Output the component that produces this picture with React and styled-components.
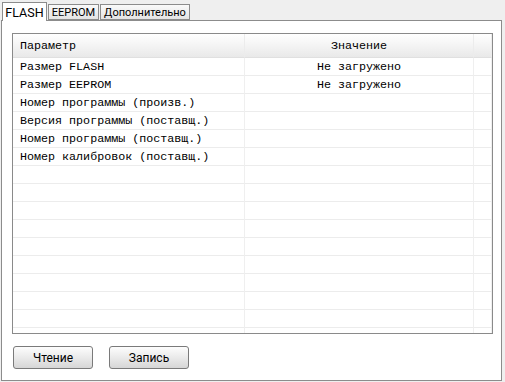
import React from 'react';
import styled, { createGlobalStyle } from 'styled-components';

const GlobalStyle = createGlobalStyle`
  html, body {
    margin: 0;
    padding: 0;
    background: #efefef;
  }
`;

const Window = styled.div`
  width: 505px;
  height: 382px;
  display: flex;
  flex-direction: column;
  background: #efefef;
  font-family: Roboto, "Liberation Sans", Arial, sans-serif;
  font-size: 11px;
  color: #000;
  overflow: hidden;
`;

const TabBar = styled.div`
  display: flex;
  align-items: flex-end;
  height: 20px;
  padding-left: 2px;
  position: relative;
  z-index: 1;
`;

const Tab = styled.div`
  width: ${(p) => p.$w}px;
  height: ${(p) => (p.$active ? '19px' : '16px')};
  margin-bottom: ${(p) => (p.$active ? '-1px' : '0')};
  margin-left: ${(p) => (p.$active ? '0' : '1px')};
  display: flex;
  justify-content: center;
  align-items: ${(p) => (p.$active ? 'flex-start' : 'center')};
  padding-top: ${(p) => (p.$active ? '2px' : '0')};
  box-sizing: border-box;
  border: 1px solid #8c8c8c;
  border-bottom: ${(p) => (p.$active ? 'none' : '1px solid #8c8c8c')};
  background: ${(p) => (p.$active ? '#fff' : 'linear-gradient(#fafafa, #e4e4e4)')};
  font-size: ${(p) => (p.$active ? '12.5px' : '11px')};
  white-space: nowrap;
`;

const Pane = styled.div`
  margin-left: 1px;
  width: 501px;
  height: 361px;
  box-sizing: border-box;
  border: 1px solid #8c8c8c;
  background: #fff;
  padding: 12px 9px 0 10px;
  display: flex;
  flex-direction: column;
`;

const Table = styled.div`
  width: 481px;
  height: 301px;
  box-sizing: border-box;
  border: 1px solid #8a8a8a;
  overflow: hidden;
  display: grid;
  grid-template-columns: 232px 229px 18px;
  grid-auto-rows: 18px;
  grid-template-rows: 24px;
  font-family: "Liberation Mono", "Courier New", monospace;
  font-size: 11.7px;
`;

const HeadCell = styled.div`
  background: linear-gradient(#ffffff, #e9e9e9);
  border-bottom: 1px solid #e0e0e0;
  border-right: 1px solid #ececec;
  display: flex;
  align-items: center;
  padding-top: 1px;
  justify-content: ${(p) => (p.$center ? 'center' : 'flex-start')};
  padding-left: ${(p) => (p.$center ? '0' : '7px')};
`;

const Cell = styled.div`
  border-bottom: 1px solid #ececec;
  border-right: 1px solid #efefef;
  display: flex;
  align-items: center;
  padding-top: 1px;
  justify-content: ${(p) => (p.$center ? 'center' : 'flex-start')};
  padding-left: ${(p) => (p.$center ? '0' : '7px')};
  white-space: nowrap;
  overflow: hidden;
`;

const Buttons = styled.div`
  display: flex;
  gap: 16px;
  margin-top: 12px;
  padding-left: 1px;
`;

const Button = styled.button`
  width: 80px;
  height: 23px;
  box-sizing: border-box;
  border: 1px solid #7a7a7a;
  border-radius: 3px;
  background: linear-gradient(#fdfdfd, #e6e6e6 60%, #d6d6d6);
  font-family: Roboto, "Liberation Sans", Arial, sans-serif;
  font-size: 12px;
  color: #000;
  padding: 0;
`;

const rows = [
  ['Размер FLASH', 'Не загружено'],
  ['Размер EEPROM', 'Не загружено'],
  ['Номер программы (произв.)', ''],
  ['Версия программы (поставщ.)', ''],
  ['Номер программы (поставщ.)', ''],
  ['Номер калибровок (поставщ.)', ''],
];

while (rows.length < 16) rows.push(['', '']);

export default function App() {
  return (
    <Window>
      <GlobalStyle />
      <TabBar>
        <Tab $active $w={45}>FLASH</Tab>
        <Tab $w={51}>EEPROM</Tab>
        <Tab $w={90}>Дополнительно</Tab>
      </TabBar>
      <Pane>
        <Table>
          <HeadCell>Параметр</HeadCell>
          <HeadCell $center>Значение</HeadCell>
          <HeadCell />
          {rows.map((r, i) => (
            <React.Fragment key={i}>
              <Cell>{r[0]}</Cell>
              <Cell $center>{r[1]}</Cell>
              <Cell />
            </React.Fragment>
          ))}
        </Table>
        <Buttons>
          <Button>Чтение</Button>
          <Button>Запись</Button>
        </Buttons>
      </Pane>
    </Window>
  );
}
